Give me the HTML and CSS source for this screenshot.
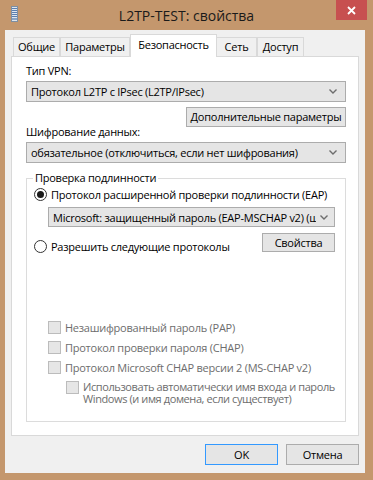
FILE: index.html
```html
<!DOCTYPE html>
<html lang="ru">
<head>
  <meta charset="UTF-8">
  <title>L2TP-TEST: свойства</title>
  <link rel="stylesheet" href="styles.css">
</head>
<body>
  <div class="window">
    <div class="titlebar">
      <div class="app-icon">
        <svg width="7" height="16" viewBox="0 0 7 16">
          <rect x="0.5" y="0.5" width="6" height="15" fill="#dfe6ee" stroke="#7d8fa3"/>
          <rect x="1" y="2" width="5" height="1" fill="#5a7fb0"/>
          <rect x="1" y="4" width="5" height="1" fill="#5a7fb0"/>
          <rect x="1" y="6" width="5" height="1" fill="#5a7fb0"/>
          <rect x="1" y="8" width="5" height="1" fill="#5a7fb0"/>
          <rect x="1" y="10" width="5" height="1" fill="#5a7fb0"/>
          <rect x="1" y="12" width="5" height="2" fill="#8aa4c4"/>
        </svg>
      </div>
      <div class="title">L2TP-TEST: свойства</div>
      <div class="close">
        <svg width="9" height="9" viewBox="0 0 9 9">
          <path d="M1 1 L8 8 M8 1 L1 8" stroke="#fff" stroke-width="1.8"/>
        </svg>
      </div>
    </div>

    <div class="client">
      <div class="tabs">
        <div class="tab tab-general">Общие</div>
        <div class="tab tab-params">Параметры</div>
        <div class="tab tab-security active">Безопасность</div>
        <div class="tab tab-net">Сеть</div>
        <div class="tab tab-access">Доступ</div>
      </div>

      <div class="panel">
        <div class="label first">Тип VPN:</div>
        <div class="combo">
          <span>Протокол L2TP с IPsec (L2TP/IPsec)</span>
          <svg class="chevron" width="8" height="5" viewBox="0 0 8 5"><path d="M0.5 0.5 L4 4 L7.5 0.5" fill="none" stroke="#6d6d6d" stroke-width="1.4"/></svg>
        </div>
        <div class="btn-row">
          <div class="btn wide">Дополнительные параметры</div>
        </div>
        <div class="label second">Шифрование данных:</div>
        <div class="combo">
          <span>обязательное (отключиться, если нет шифрования)</span>
          <svg class="chevron" width="8" height="5" viewBox="0 0 8 5"><path d="M0.5 0.5 L4 4 L7.5 0.5" fill="none" stroke="#6d6d6d" stroke-width="1.4"/></svg>
        </div>

        <fieldset class="group">
          <legend>Проверка подлинности</legend>

          <div class="option eap">
            <span class="radio checked"></span>
            <span>Протокол расширенной проверки подлинности (EAP)</span>
          </div>
          <div class="combo inner">
            <span>Microsoft: защищенный пароль (EAP-MSCHAP v2) (ш</span>
            <svg class="chevron" width="8" height="5" viewBox="0 0 8 5"><path d="M0.5 0.5 L4 4 L7.5 0.5" fill="none" stroke="#6d6d6d" stroke-width="1.4"/></svg>
          </div>
          <div class="option allow">
            <span class="radio"></span>
            <span class="grow">Разрешить следующие протоколы</span>
            <div class="btn props">Свойства</div>
          </div>

          <div class="checks">
            <div class="check-row"><span class="box"></span><span>Незашифрованный пароль (PAP)</span></div>
            <div class="check-row"><span class="box"></span><span>Протокол проверки пароля (CHAP)</span></div>
            <div class="check-row"><span class="box"></span><span>Протокол Microsoft CHAP версии 2 (MS-CHAP v2)</span></div>
            <div class="check-row sub"><span class="box"></span><span>Использовать автоматически имя входа и пароль<br>Windows (и имя домена, если существует)</span></div>
          </div>
        </fieldset>
      </div>

      <div class="footer">
        <div class="btn dialog default">OK</div>
        <div class="btn dialog">Отмена</div>
      </div>
    </div>
  </div>
</body>
</html>
```

FILE: styles.css
```css
body {
  margin: 0;
  background-color: #c4976d;
  font-family: "Open Sans", "Noto Sans", sans-serif;
  font-size: 11px;
  letter-spacing: -0.25px;
  color: #000;
}

.window {
  width: 373px;
  height: 480px;
}

/* title bar */
.titlebar {
  height: 30px;
  display: grid;
  grid-template-columns: 1fr auto 1fr;
  align-items: start;
}

.app-icon {
  padding: 6px 0 0 11px;
}

.title {
  font-size: 14px;
  letter-spacing: 0;
  line-height: 31px;
  color: #1a1a1a;
}

.close {
  justify-self: end;
  margin-right: 6px;
  width: 31px;
  height: 20px;
  background-color: #c75050;
  display: flex;
  align-items: center;
  justify-content: center;
}

/* client area */
.client {
  margin-left: 5px;
  width: 360px;
  height: 443px;
  background-color: #f0f0f0;
  padding-top: 4px;
  box-sizing: border-box;
}

.tabs {
  display: flex;
  align-items: flex-end;
  height: 22px;
  padding-left: 8px;
  position: relative;
  z-index: 1;
}

.tab {
  flex: none;
  height: 19px;
  box-sizing: border-box;
  border: 1px solid #d9d9d9;
  border-bottom: none;
  background-color: #f0f0f0;
  line-height: 17px;
  text-align: center;
  white-space: nowrap;
}

.tab-general { width: 47px; }
.tab-params { width: 70px; }
.tab-security { width: 87px; }
.tab-net { width: 41px; margin-left: -1px; }
.tab-access { width: 47px; }

.tab.active {
  height: 23px;
  margin-bottom: -1px;
  background-color: #fff;
  line-height: 19px;
  position: relative;
}

.panel {
  margin-left: 6px;
  width: 348px;
  height: 380px;
  box-sizing: border-box;
  border: 1px solid #d9d9d9;
  background-color: #fff;
  padding: 0 12px 0 14px;
}

.label {
  line-height: 14px;
  height: 14px;
}

.label.first { margin-top: 7px; }
.label.second { margin-top: -2px; }

.combo {
  height: 21px;
  box-sizing: border-box;
  border: 1px solid #acacac;
  background-color: #e5e5e5;
  display: flex;
  align-items: center;
  gap: 4px;
  padding: 0 8px 0 4px;
  margin-top: 3px;
  white-space: nowrap;
  overflow: hidden;
}

.combo span {
  flex: 1;
  overflow: hidden;
}

.chevron {
  flex: none;
}

.btn {
  flex: none;
  box-sizing: border-box;
  border: 1px solid #acacac;
  background-color: #e5e5e5;
  text-align: center;
  white-space: nowrap;
}

.btn-row {
  display: flex;
  justify-content: flex-end;
  margin-top: 5px;
}

.btn.wide {
  width: 160px;
  height: 20px;
  line-height: 18px;
}

/* authentication group */
.group {
  margin: 8px 0 0 0;
  padding: 0;
  min-width: 0;
  height: 251px;
  box-sizing: border-box;
  border: 1px solid #dcdcdc;
}

.group legend {
  margin-left: 6px;
  padding: 0 2px;
  line-height: 14px;
}

.option {
  display: flex;
  align-items: center;
  gap: 4px;
  margin-left: 7px;
  height: 15px;
  white-space: nowrap;
}

.option.eap {
  margin-top: 2px;
}

.radio {
  flex: none;
  width: 13px;
  height: 13px;
  box-sizing: border-box;
  border: 1px solid #333;
  border-radius: 50%;
  background-color: #fff;
  display: flex;
  align-items: center;
  justify-content: center;
}

.radio.checked::after {
  content: "";
  width: 7px;
  height: 7px;
  border-radius: 50%;
  background-color: #1a1a1a;
}

.combo.inner {
  margin: 5px 10px 0 21px;
  height: 20px;
  padding-right: 6px;
}

.option.allow {
  align-items: flex-start;
  margin-top: 6px;
  margin-right: 10px;
  height: 19px;
}

.option.allow .radio {
  margin-top: 7px;
}

.grow {
  flex: 1;
  margin-top: 6px;
  line-height: 15px;
}

.btn.props {
  width: 73px;
  height: 19px;
  line-height: 17px;
}

.checks {
  margin: 69px 0 0 21px;
  color: #6d6d6d;
}

.check-row {
  display: flex;
  align-items: center;
  gap: 4px;
  height: 13px;
  margin-bottom: 7px;
  white-space: nowrap;
}

.box {
  flex: none;
  width: 13px;
  height: 13px;
  box-sizing: border-box;
  border: 1px solid #bcbcbc;
  background-color: #e6e6e6;
}

.check-row.sub {
  margin-left: 18px;
  align-items: flex-start;
  line-height: 12px;
  letter-spacing: -0.4px;
}

/* dialog buttons */
.footer {
  display: flex;
  justify-content: flex-end;
  gap: 8px;
  margin: 8px 6px 0 0;
}

.btn.dialog {
  width: 73px;
  height: 21px;
  line-height: 19px;
}

.btn.default {
  border-color: #3399ff;
}
```
